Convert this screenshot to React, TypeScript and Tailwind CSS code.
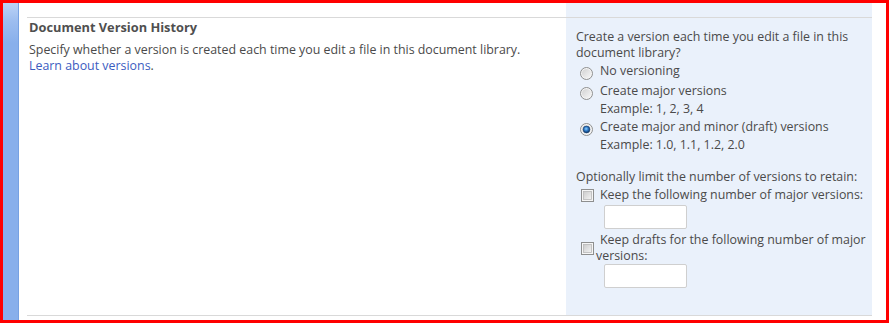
import React from "react";

function Radio({ checked = false }: { checked?: boolean }) {
  return (
    <svg width="13" height="13" viewBox="0 0 13 13" className="shrink-0">
      <defs>
        <linearGradient id={checked ? "rgc" : "rgu"} x1="0" y1="0" x2="1" y2="1">
          <stop offset="0" stopColor="#d2d2d2" />
          <stop offset="1" stopColor="#f7f7f7" />
        </linearGradient>
        <radialGradient id="dot" cx="0.45" cy="0.4" r="0.6">
          <stop offset="0" stopColor="#8fd0ff" />
          <stop offset="0.5" stopColor="#2c78c6" />
          <stop offset="1" stopColor="#0d315e" />
        </radialGradient>
      </defs>
      <circle cx="6.5" cy="6.5" r="6" fill="#f4f4f4" stroke="#8e8f8f" strokeWidth="1" />
      <circle cx="6.5" cy="6.5" r="4.6" fill={`url(#${checked ? "rgc" : "rgu"})`} />
      {checked && <circle cx="6.5" cy="6.5" r="3.4" fill="url(#dot)" stroke="#123c6e" strokeWidth="0.6" />}
    </svg>
  );
}

function Checkbox() {
  return (
    <svg width="13" height="13" viewBox="0 0 13 13" className="shrink-0">
      <defs>
        <linearGradient id="cbg" x1="0" y1="0" x2="1" y2="1">
          <stop offset="0" stopColor="#cbcbcb" />
          <stop offset="1" stopColor="#f4f4f4" />
        </linearGradient>
      </defs>
      <rect x="0.5" y="0.5" width="12" height="12" fill="#f6f6f6" stroke="#8e8f8f" />
      <rect x="2.5" y="2.5" width="8" height="8" fill="url(#cbg)" stroke="#b9b9b9" strokeWidth="0.8" />
    </svg>
  );
}

function TextBox() {
  return (
    <input
      type="text"
      readOnly
      className="block h-[24px] w-[83px] rounded-[2px] border border-[#cfcfcf] bg-white outline-none"
    />
  );
}

export default function App() {
  return (
    <div
      className="flex h-[323px] w-[889px] border-[3px] border-[#ff0000] bg-white text-[12.4px] text-[#4a4a4a]"
      style={{ fontFamily: '"Open Sans", "Noto Sans", sans-serif' }}
    >
      <div className="h-full w-[16px] shrink-0 border-r border-[#77a1e2] bg-[linear-gradient(180deg,#bcd3f6_0px,#9dbdef_18px,#88afeb_40px,#88afeb_100%)]" />
      <div className="flex flex-col pl-[8px] pr-[14px]">
        <div className="flex h-[14px]">
          <div className="w-[539px]" />
          <div className="w-[306px] bg-[#eaf1fb]" />
        </div>
        <div className="h-px w-[845px] bg-[#d9d9d9]" />
        <div className="flex h-[297px]">
          <div className="w-[539px] pl-[2px] pt-[1px]">
            <div className="text-[12.8px] font-bold leading-[16px] text-[#4f4f4f]">Document Version History</div>
            <div className="mt-[7px] leading-[16px]">
              <div>Specify whether a version is created each time you edit a file in this document library.</div>
              <div>
                <a className="text-[#3c5cbf]">Learn about versions</a>.
              </div>
            </div>
          </div>
          <div className="w-[306px] bg-[#eaf1fb] pl-[10px] pr-[4px] pt-[11px] leading-[16px]">
            <div>Create a version each time you edit a file in this document library?</div>
            <div className="flex h-[20px] items-start">
              <div className="ml-[4px] mr-[7px] mt-[6px]">
                <Radio />
              </div>
              <div className="mt-[2px]">No versioning</div>
            </div>
            <div className="flex h-[20px] items-start">
              <div className="ml-[4px] mr-[7px] mt-[6px]">
                <Radio />
              </div>
              <div className="mt-[2px]">Create major versions</div>
            </div>
            <div className="pl-[24px]">Example: 1, 2, 3, 4</div>
            <div className="flex h-[20px] items-start">
              <div className="ml-[4px] mr-[7px] mt-[6px]">
                <Radio checked />
              </div>
              <div className="mt-[2px]">Create major and minor (draft) versions</div>
            </div>
            <div className="pl-[24px]">Example: 1.0, 1.1, 1.2, 2.0</div>
            <div className="mt-[16px]">Optionally limit the number of versions to retain:</div>
            <div className="flex h-[20px] items-start">
              <div className="ml-[5px] mr-[6px] mt-[4px]">
                <Checkbox />
              </div>
              <div className="mt-[2px] whitespace-nowrap">Keep the following number of major versions:</div>
            </div>
            <div className="pl-[28px]">
              <TextBox />
            </div>
            <div className="mt-[3px] flex items-start">
              <div className="ml-[5px] mr-[2px] mt-[10px]">
                <Checkbox />
              </div>
              <div className="indent-[4px]">Keep drafts for the following number of major versions:</div>
            </div>
            <div className="pl-[28px]">
              <TextBox />
            </div>
          </div>
        </div>
        <div className="h-px w-[845px] bg-[#d9d9d9]" />
      </div>
    </div>
  );
}
